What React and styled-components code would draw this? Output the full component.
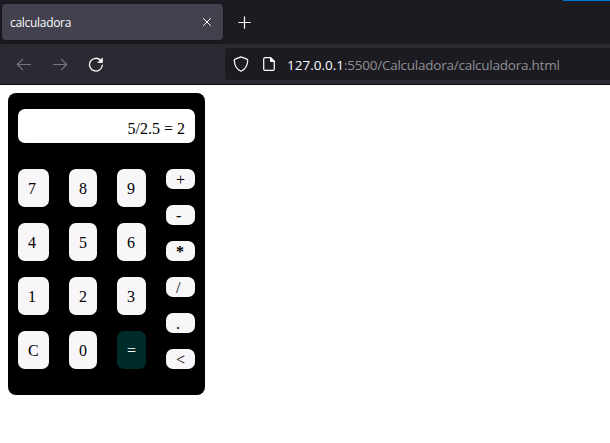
import React from 'react';
import styled, { createGlobalStyle } from 'styled-components';

const GlobalStyle = createGlobalStyle`
  * { box-sizing: border-box; }
  body { margin: 0; background: #fff; overflow: hidden; }
`;

const Browser = styled.div`
  width: 610px;
  height: 443px;
  background: #fff;
  font-family: 'Open Sans', 'Noto Sans', sans-serif;
`;

const TabBar = styled.div`
  position: relative;
  display: flex;
  height: 44px;
  padding: 4px 0 4px 2px;
  background: #1c1b22;
`;

const WindowAccent = styled.div`
  position: absolute;
  top: 0;
  right: 0;
  width: 47px;
  height: 1px;
  background: #0078d7;
`;

const Tab = styled.div`
  display: flex;
  align-items: center;
  justify-content: space-between;
  width: 221px;
  height: 36px;
  padding: 0 11px 0 8px;
  border-radius: 4px;
  background: #42414d;
  box-shadow: 0 0 3px rgba(0, 0, 0, 0.5);
  color: #fbfbfe;
`;

const TabTitle = styled.span`
  font-size: 12px;
  line-height: 16px;
  letter-spacing: -0.3px;
  padding-top: 1px;
`;

const NewTab = styled.div`
  display: flex;
  align-items: center;
  margin-left: 15px;
`;

const Toolbar = styled.div`
  display: flex;
  align-items: center;
  height: 41px;
  padding: 0 0 1px 16px;
  background: #2b2a33;
  border-bottom: 1px solid #0c0c0d;
`;

const NavButtons = styled.div`
  display: flex;
  gap: 20px;
  width: 209px;
`;

const AddressBar = styled.div`
  display: flex;
  align-items: center;
  flex: 1;
  height: 32px;
  margin-top: 1px;
  padding-left: 8px;
  border-radius: 4px 0 0 4px;
  background: #1c1b22;
`;

const Url = styled.span`
  margin-left: 10px;
  padding-top: 2px;
  white-space: nowrap;
  font-size: 13.5px;
  line-height: 20px;
  letter-spacing: -0.24px;
  color: #8f8f95;
`;

const Host = styled.span`
  color: #fbfbfe;
  letter-spacing: 0;
`;

const Icon = styled.svg`
  display: block;
  flex: none;
  fill: none;
  stroke: ${(p) => p.$color || '#fbfbfe'};
  stroke-width: ${(p) => p.$weight || 1.25};
  stroke-linecap: round;
  stroke-linejoin: round;
  margin-left: ${(p) => p.$offset || 0}px;
`;

const Calculator = styled.main`
  width: 197px;
  height: 302px;
  margin: 8px 0 0 8px;
  padding: 16px 10px;
  border-radius: 8px;
  background: #000;
  color: #000;
  font-family: 'Liberation Serif', serif;
  font-size: 16px;
  line-height: 18px;
`;

const Display = styled.div`
  height: 34px;
  padding: 11px 10px 5px;
  border-radius: 7px;
  background: #fff;
  text-align: right;
`;

const Keypad = styled.div`
  display: grid;
  grid-template-columns: 31px 28px 29px 29px;
  column-gap: 20px;
  margin-top: 26px;
`;

const Column = styled.div`
  display: flex;
  flex-direction: column;
  gap: 16px;
`;

const Key = styled.div`
  height: ${(p) => (p.$small ? 20 : 38)}px;
  padding: ${(p) => (p.$small ? '2px' : '11px')} 0 0 10px;
  border-radius: 7px;
  background: ${(p) => (p.$accent ? '#002b2b' : '#f8f6f8')};
  color: ${(p) => (p.$accent ? '#fff' : '#000')};
  font-weight: ${(p) => (p.$bold ? 700 : 400)};
`;

const columns = [
  ['7', '4', '1', 'C'],
  ['8', '5', '2', '0'],
  ['9', '6', '3', '='],
  ['+', '-', '*', '/', '.', '<'],
];

export default function App() {
  return (
    <>
      <GlobalStyle />
      <Browser>
        <TabBar>
          <Tab>
            <TabTitle>calculadora</TabTitle>
            <Icon width="10" height="10" viewBox="0 0 10 10" $weight={1}>
              <path d="M1.5 1.5l7 7M8.5 1.5l-7 7" />
            </Icon>
          </Tab>
          <NewTab>
            <Icon width="13" height="13" viewBox="0 0 13 13" $weight={1.2}>
              <path d="M6.5 .8v11.4M.8 6.5h11.4" />
            </Icon>
          </NewTab>
          <WindowAccent />
        </TabBar>
        <Toolbar>
          <NavButtons>
            <Icon width="16" height="16" viewBox="0 0 16 16" $color="#77767e" $weight={1.2}>
              <path d="M14.5 8.5h-13M6.5 3.3L1.4 8.5l5.1 5.2" />
            </Icon>
            <Icon width="16" height="16" viewBox="0 0 16 16" $color="#77767e" $weight={1.2}>
              <path d="M1.5 8.5h13M9.5 3.3l5.1 5.2-5.1 5.2" />
            </Icon>
            <Icon width="16" height="16" viewBox="0 0 16 16" $weight={1.3}>
              <path d="M14.3 9.2A6.4 6.4 0 1 1 12.6 4.3" />
              <path d="M14.4 2.3v4.2h-4.2z" fill="#fbfbfe" strokeWidth="0.8" />
            </Icon>
          </NavButtons>
          <AddressBar>
            <Icon width="16" height="16" viewBox="0 0 16 16">
              <path d="M8 .9l5.9 2.3c.5.2.8.6.8 1.1-.1 5-1.9 8.8-6.7 11-4.8-2.2-6.6-6-6.7-11 0-.5.3-.9.8-1.1z" />
            </Icon>
            <Icon width="16" height="16" viewBox="0 0 16 16" $offset={12}>
              <path d="M9.7 1.7H4A1.3 1.3 0 0 0 2.7 3v10A1.3 1.3 0 0 0 4 14.3h8a1.3 1.3 0 0 0 1.3-1.3V5.3z" />
              <path d="M9.5 1.9v3.6h3.7z" fill="#fbfbfe" strokeWidth="1" />
            </Icon>
            <Url>
              <Host>127.0.0.1</Host>:5500/Calculadora/calculadora.html
            </Url>
          </AddressBar>
        </Toolbar>
        <Calculator>
          <Display>5/2.5 = 2</Display>
          <Keypad>
            {columns.map((keys, i) => (
              <Column key={i}>
                {keys.map((k) => (
                  <Key key={k} $small={i === 3} $accent={k === '='} $bold={k === '*'}>
                    {k}
                  </Key>
                ))}
              </Column>
            ))}
          </Keypad>
        </Calculator>
      </Browser>
    </>
  );
}
